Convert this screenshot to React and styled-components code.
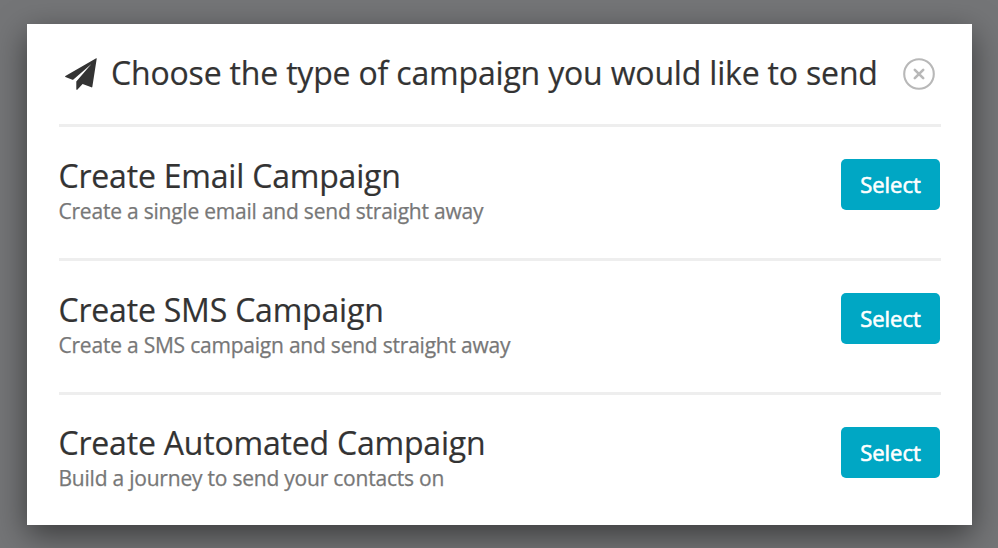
import React from "react"
import styled, { createGlobalStyle } from "styled-components"

const GlobalStyle = createGlobalStyle`
  * {
    box-sizing: border-box;
  }

  body {
    margin: 0;
    background: #747577;
    font-family: "Open Sans", sans-serif;
    color: #333;
  }
`

/**
 * Greyed out page behind the dialog
 */
const Overlay = styled.div`
  height: 548px;
  padding: 24px 26px 23px 27px;
  overflow: hidden;
  background: #747577;
`

const Dialog = styled.section`
  width: 945px;
  height: 501px;
  padding: 0 31px 0 32px;
  background: #fff;
  box-shadow: 0 10px 30px rgba(0, 0, 0, 0.5);
`

const DialogHeader = styled.header`
  display: flex;
  align-items: center;
  height: 100px;
  padding: 0 6px;
`

const PlaneIcon = styled.svg`
  flex: none;
  width: 32px;
  height: 32px;
  fill: #333;
`

const DialogTitle = styled.h1`
  flex: 1;
  margin: 0 0 2px 14px;
  font-size: 32px;
  font-weight: 400;
  line-height: 44px;
  letter-spacing: -0.18px;
  white-space: nowrap;
  -webkit-text-stroke: 0.2px #333;
`

const CloseButton = styled.button`
  flex: none;
  width: 32px;
  height: 32px;
  padding: 0;
  border: none;
  background: transparent;
  cursor: pointer;

  svg {
    display: block;
    fill: none;
    stroke: #b8b8b8;
  }
`

/**
 * One campaign type with its button
 */
const Option = styled.div`
  display: flex;
  justify-content: space-between;
  align-items: flex-start;
  height: 134px;
  padding: 32px 1px 0 0;
  border-top: 3px solid #eee;
`

const OptionBody = styled.div`
  margin: -1px 0 0 -0.5px;

  ${Option}:last-child & {
    margin-top: -2px;
  }
`

const OptionTitle = styled.h2`
  margin: 0;
  font-size: 32px;
  font-weight: 400;
  line-height: 36px;
  letter-spacing: -0.2px;
  -webkit-text-stroke: 0.2px #333;
`

const OptionText = styled.p`
  margin: 2px 0 0;
  font-size: 21px;
  line-height: 30px;
  letter-spacing: -0.22px;
  color: #777;
  -webkit-text-stroke: 0.25px #777;
`

const SelectButton = styled.button`
  width: 99px;
  height: 51px;
  padding: 0 0 2px;
  border: none;
  border-radius: 5px;
  background: #00a7c4;
  color: #fff;
  font-family: inherit;
  font-size: 22px;
  -webkit-text-stroke: 0.6px #fff;
  cursor: pointer;
`

const campaigns = [
  { title: "Create Email Campaign", text: "Create a single email and send straight away" },
  { title: "Create SMS Campaign", text: "Create a SMS campaign and send straight away" },
  { title: "Create Automated Campaign", text: "Build a journey to send your contacts on" },
]

export default function App() {
  return (
    <Overlay>
      <GlobalStyle />
      <Dialog role="dialog" aria-labelledby="dialog-title">
        <DialogHeader>
          <PlaneIcon viewBox="0 0 32 32" aria-hidden="true">
            <path d="M31.2.2Q31.8 0 31.7.7L27.3 28.9Q27.1 29.6 26.4 29.3L17.6 26.1 12.3 31.7Q11.3 32.2 11.3 31.2V23.4L26.4 6 8.4 21.5Q7.9 21.9 7.4 21.7L.4 18.9Q-.2 18.5.4 18.1Z" />
          </PlaneIcon>
          <DialogTitle id="dialog-title">Choose the type of campaign you would like to send</DialogTitle>
          <CloseButton aria-label="Close">
            <svg width="32" height="32" viewBox="0 0 32 32">
              <circle cx="16" cy="16" r="14.8" strokeWidth="2.1" />
              <path d="M11.8 11.8l8.4 8.4M20.2 11.8l-8.4 8.4" strokeWidth="2.6" strokeLinecap="round" />
            </svg>
          </CloseButton>
        </DialogHeader>

        {campaigns.map(campaign => (
          <Option key={campaign.title}>
            <OptionBody>
              <OptionTitle>{campaign.title}</OptionTitle>
              <OptionText>{campaign.text}</OptionText>
            </OptionBody>
            <SelectButton>Select</SelectButton>
          </Option>
        ))}
      </Dialog>
    </Overlay>
  )
}
